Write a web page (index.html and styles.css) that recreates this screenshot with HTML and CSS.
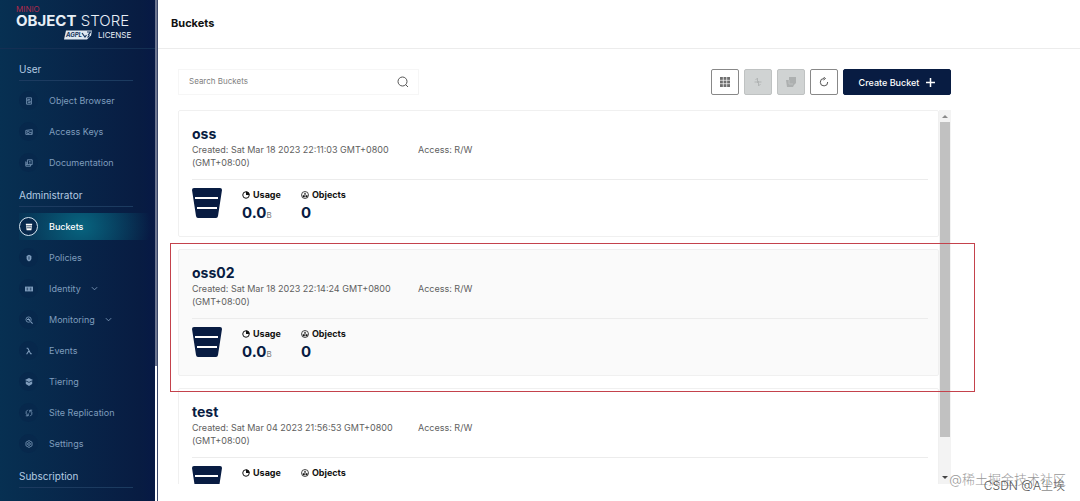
FILE: index.html
```html
<!DOCTYPE html>
<html lang="en">
<head>
<meta charset="UTF-8">
<meta name="viewport" content="width=device-width, initial-scale=1.0">
<title>Buckets</title>
<link rel="stylesheet" href="styles.css">
</head>
<body>

<!-- shared icons -->
<svg width="0" height="0" class="sprite">
  <symbol id="bucket" viewBox="0 0 30 30">
    <path fill="#081c42" d="M2 0h26q2 0 2 2l-4 26q-.3 2-2 2H6q-1.700 0-2-2L0 2Q0 0 2 0z"/>
    <path stroke="#fff" stroke-width="2" d="M3 10h23M5 20h20"/>
  </symbol>
  <symbol id="usage" viewBox="0 0 16 16">
    <circle cx="8" cy="8" r="6.500" fill="none" stroke="currentColor" stroke-width="2"/>
    <path d="M8 1v7h7a7 7 0 0 0-7-7z" fill="currentColor"/>
  </symbol>
  <symbol id="objects" viewBox="0 0 16 16">
    <circle cx="8" cy="8" r="7" fill="none" stroke="currentColor" stroke-width="1.500"/>
    <path d="M8 3l2.500 4h-5zM3.500 8.500h4v4h-4zM9 8.500h4v4H9z" fill="currentColor"/>
  </symbol>
  <symbol id="chevron" viewBox="0 0 8 8">
    <path d="M1 2.500l3 3 3-3" fill="none" stroke="currentColor"/>
  </symbol>
</svg>

<div class="app">
  <aside class="sidebar">
    <div class="logo">
      <div class="logo-brand">MINIO</div>
      <div class="logo-name"><b>OBJECT</b> STORE</div>
      <div class="logo-license">
        <svg width="29" height="10" viewBox="0 0 29 10">
          <path d="M2 0.500h26l-1 5-4 4H0z" fill="#dfe8f0"/>
          <path d="M18 3l3 4 1.500-2M23 2h3.500l-2 2.500q1.500 1-1 3" fill="none" stroke="#12315a" stroke-width="1.200"/>
          <text x="2" y="7" class="agpl">AGPL</text>
        </svg>
        <span>LICENSE</span>
      </div>
    </div>
    <nav class="menu">
      <h2>User</h2>
      <a href="#"><span class="icon"><svg viewBox="0 0 10 10"><path d="M2 1h6v8H2zM6.500 3h-3v2h3v2h-3"/></svg></span>Object Browser</a>
      <a href="#"><span class="icon"><svg viewBox="0 0 10 10"><path d="M1 3l8-1v6H1z"/><circle cx="4" cy="5.500" r="1.500"/><path d="M6 5.500h2v1.500"/></svg></span>Access Keys</a>
      <a href="#"><span class="icon"><svg viewBox="0 0 10 10"><path d="M3 1h6v6H3zM1 3v6h6V7M5 3h2M5 5h2M1 5h2M1 7h2"/></svg></span>Documentation</a>

      <h2>Administrator</h2>
      <a href="#" class="active"><span class="icon"><svg viewBox="0 0 10 10"><path class="solid" d="M1 1h8L8 9H2z"/><path class="cut" d="M1.500 3.500h7M2 6h6"/></svg></span>Buckets</a>
      <a href="#"><span class="icon"><svg viewBox="0 0 10 10"><path class="solid" d="M5 1l3 1.500V6Q8 8 5 9.500 2 8 2 6V2.500z"/><path class="cut" d="M5 3v4"/></svg></span>Policies</a>
      <a href="#"><span class="icon"><svg viewBox="0 0 10 10"><path class="solid" d="M0 2h10v6H0z"/><path class="cut" d="M2 4h2M2 6h2M6 4h2M6 6h2"/></svg></span>Identity<svg class="chevron"><use href="#chevron"/></svg></a>
      <a href="#"><span class="icon"><svg viewBox="0 0 10 10"><circle cx="4.500" cy="4.500" r="3.300"/><path d="M7 7l2.500 2.500M2.500 4.500h1l1-1 1 2 1-1" stroke-width="1.300"/></svg></span>Monitoring<svg class="chevron"><use href="#chevron"/></svg></a>
      <a href="#"><span class="icon"><svg viewBox="0 0 10 10"><path d="M2 1.500h1.500l3.500 7h1.500M5 4.500l-3 4.500" stroke-width="1.300"/></svg></span>Events</a>
      <a href="#"><span class="icon"><svg viewBox="0 0 10 10"><path class="solid" d="M5 0l5 2.500L5 5 0 2.500zM1 4l4 2 4-2v3.500L5 10 1 7.500z"/></svg></span>Tiering</a>
      <a href="#"><span class="icon"><svg viewBox="0 0 10 10"><path d="M3.500 1Q.5 3 1.500 6L4 8.500M1 8.500h3v-3M6.500 9q3-2 2-5L6 1.500M9 1.500H6v3"/></svg></span>Site Replication</a>
      <a href="#"><span class="icon"><svg viewBox="0 0 10 10"><path d="M5 .7l3.800 2.100v4.400L5 9.300 1.200 7.200V2.800z"/><circle cx="5" cy="5" r="1.700"/></svg></span>Settings</a>

      <h2>Subscription</h2>
    </nav>
  </aside>
  <div class="side-scroll"><div class="side-thumb"></div></div>

  <main>
    <header class="page-header"><h1>Buckets</h1></header>
    <div class="content">
      <div class="toolbar">
        <div class="search">
          <input type="text" placeholder="Search Buckets" aria-label="Search Buckets">
          <svg width="12" height="12" viewBox="0 0 12 12"><path d="M8.500 8.500L11 11" /><circle cx="5.500" cy="5.500" r="4.500"/></svg>
        </div>
        <div class="actions">
          <button type="button" class="btn" aria-label="Select multiple"><svg width="10" height="10" viewBox="0 0 10 10"><path d="M0 0h10v10H0z" fill="#6e6e6e"/><path d="M3.300 0v10M6.700 0v10M0 3.300h10M0 6.700h10" stroke="#fff" stroke-width=".7"/></svg></button>
          <button type="button" class="btn" disabled aria-label="Set lifecycle"><svg width="10" height="10" viewBox="0 0 10 10" fill="none" stroke="#b2b5b5"><path d="M4.500 6V1L2.500 3M1.500 5h7M5.500 4v5l2-2"/></svg></button>
          <button type="button" class="btn" disabled aria-label="Set replication"><svg width="10" height="10" viewBox="0 0 10 10"><path d="M3 0h7v6L8 8l-1 2H1L0 3h3z" fill="#adb0b0"/><path d="M3 3v4h4" fill="none" stroke="#c0c3c3"/></svg></button>
          <button type="button" class="btn" aria-label="Refresh"><svg width="10" height="10" viewBox="0 0 10 10" fill="none" stroke="#555"><path d="M5 1.500A3.700 3.700 0 1 0 8.700 5M4.500 0l2 1.500-2 1.500"/></svg></button>
          <button type="button" class="btn create">Create Bucket <svg width="9" height="9" viewBox="0 0 9 9"><path d="M4.500 0v9M0 4.500h9" stroke="#fff" stroke-width="1.500"/></svg></button>
        </div>
      </div>

      <div class="list">
        <div class="cards">
          <article class="card">
            <h3>oss</h3>
            <div class="info">
              <p>Created: Sat Mar 18 2023 22:11:03 GMT+0800 (GMT+08:00)</p>
              <p>Access: R/W</p>
            </div>
            <div class="stats">
              <svg class="bucket"><use href="#bucket"/></svg>
              <div class="stat"><h4><svg><use href="#usage"/></svg>Usage</h4><strong>0.0</strong><small>B</small></div>
              <div class="stat"><h4><svg><use href="#objects"/></svg>Objects</h4><strong>0</strong></div>
            </div>
          </article>
          <article class="card hovered">
            <h3>oss02</h3>
            <div class="info">
              <p>Created: Sat Mar 18 2023 22:14:24 GMT+0800 (GMT+08:00)</p>
              <p>Access: R/W</p>
            </div>
            <div class="stats">
              <svg class="bucket"><use href="#bucket"/></svg>
              <div class="stat"><h4><svg><use href="#usage"/></svg>Usage</h4><strong>0.0</strong><small>B</small></div>
              <div class="stat"><h4><svg><use href="#objects"/></svg>Objects</h4><strong>0</strong></div>
            </div>
          </article>
          <article class="card">
            <h3>test</h3>
            <div class="info">
              <p>Created: Sat Mar 04 2023 21:56:53 GMT+0800 (GMT+08:00)</p>
              <p>Access: R/W</p>
            </div>
            <div class="stats">
              <svg class="bucket"><use href="#bucket"/></svg>
              <div class="stat"><h4><svg><use href="#usage"/></svg>Usage</h4></div>
              <div class="stat"><h4><svg><use href="#objects"/></svg>Objects</h4></div>
            </div>
          </article>
        </div>
        <div class="scrollbar">
          <svg width="12" height="12" viewBox="0 0 12 12"><path d="M3 8l3-3 3 3z" fill="#8a8a8a"/></svg>
          <div class="track"><div class="thumb"></div></div>
          <svg width="12" height="12" viewBox="0 0 12 12"><path d="M3 4l3 3 3-3z" fill="#444"/></svg>
        </div>
      </div>
    </div>
  </main>
</div>

<!-- marks drawn over the page -->
<div class="highlight"></div>
<div class="watermark juejin">@稀土掘金技术社区</div>
<div class="watermark csdn">CSDN @A尘埃</div>

</body>
</html>
```

FILE: styles.css
```css
* {
  box-sizing: border-box;
}

body {
  margin: 0;
  font-family: Inter, "Noto Sans CJK SC", sans-serif;
  font-size: 9px;
  color: #5e5e60;
  background-color: #fff;
}

h1, h2, h3, h4, p {
  margin: 0;
}

.sprite {
  position: absolute;
}

.app {
  display: flex;
  height: 100vh;
  overflow: hidden;
}

/* sidebar */
.sidebar {
  flex: 0 0 155px;
  overflow: hidden;
  background: linear-gradient(90deg, #073052 0%, #081c42 90%, #071945 100%);
}

.logo {
  height: 49px;
  padding: 5px 0 0 16px;
  border-bottom: 1px solid #142f53;
  color: #e8eff6;
}

.logo-brand {
  height: 8px;
  font-size: 8px;
  line-height: 8px;
  color: #b02a4c;
}

.logo-name {
  font-size: 15px;
  line-height: 16px;
  font-weight: 300;
  white-space: nowrap;
}

.logo-name b {
  font-weight: 700;
}

.logo-license {
  display: flex;
  align-items: center;
  gap: 5px;
  padding-left: 48px;
  font-size: 8px;
  line-height: 12px;
}

.agpl {
  font-size: 6px;
  font-style: italic;
  font-weight: 700;
  fill: #12315a;
}

.menu {
  padding: 8px 0 0 19px;
}

.menu h2 {
  width: 114px;
  height: 24px;
  margin-bottom: 4px;
  border-bottom: 1px solid #1c3b60;
  font-size: 10px;
  line-height: 24px;
  font-weight: 400;
  color: #b4cbe2;
}

.menu a + h2 {
  margin-top: 5px;
}

.menu a {
  display: flex;
  align-items: center;
  height: 31px;
  font-size: 9px;
  color: #7f9dbd;
  text-decoration: none;
}

.icon {
  display: flex;
  align-items: center;
  justify-content: center;
  width: 19px;
  height: 19px;
  margin-right: 11px;
  border-radius: 50%;
  background-color: #07284c;
}

.icon svg {
  width: 8px;
  height: 8px;
  fill: none;
  stroke: #7f9dbd;
}

.icon .solid {
  fill: #7f9dbd;
  stroke: none;
}

.icon .cut {
  stroke: #07264a;
}

.chevron {
  width: 7px;
  height: 7px;
  margin-left: 10px;
}

.menu .active {
  padding: 2px 0;
  color: #fff;
  font-weight: 500;
  background: radial-gradient(ellipse 70px 60px at 62px 50%, #07647f, #081c4200) content-box;
}

.active .icon {
  border: 1px solid #d5e4ef;
}

.active .solid {
  fill: #fff;
}

.side-scroll {
  flex: 0 0 3px;
  border-right: 1px solid #3a4668;
  background-color: #fff;
}

.side-thumb {
  height: 73%;
  background-color: #6d7690;
}

/* main area */
main {
  flex: 1;
  display: flex;
  flex-direction: column;
  min-width: 0;
}

.page-header {
  height: 49px;
  padding-left: 13px;
  border-bottom: 1px solid #ececec;
}

.page-header h1 {
  font-size: 11px;
  line-height: 46px;
  color: #111;
}

.content {
  flex: 1;
  display: flex;
  flex-direction: column;
  min-height: 0;
  margin: 20px 129px 17px 20px;
}

.toolbar {
  display: flex;
  justify-content: space-between;
  margin-bottom: 15px;
}

.search {
  display: flex;
  align-items: center;
  width: 241px;
  height: 26px;
  padding: 0 9px 0 10px;
  border: 1px solid #f6f6f6;
}

.search input {
  flex: 1;
  min-width: 0;
  padding: 0 0 2px;
  border: none;
  outline: none;
  font: 8px Inter, sans-serif;
}

.search input::placeholder {
  color: #808080;
}

.search svg {
  fill: none;
  stroke: #555;
}

.actions {
  display: flex;
  gap: 5px;
}

.btn {
  display: flex;
  align-items: center;
  justify-content: center;
  width: 28px;
  height: 26px;
  padding: 0;
  border: 1px solid #888;
  border-radius: 2px;
  background-color: #fff;
}

.btn:disabled {
  border-color: #bfc2c2;
  background-color: #d0d3d3;
}

.create {
  gap: 7px;
  width: 108px;
  border-color: #081c42;
  background-color: #081c42;
  color: #fff;
  font: 500 9px Inter, sans-serif;
}

.list {
  flex: 1;
  display: flex;
  min-height: 0;
}

.cards {
  flex: 1;
  overflow: hidden;
}

.card {
  height: 127px;
  margin-bottom: 12px;
  padding: 14px 10px 0 13px;
  border: 1px solid #f0f0f0;
  border-radius: 2px;
}

.hovered {
  background-color: #fafafa;
}

.card h3 {
  font-size: 14px;
  line-height: 18px;
  color: #081c42;
}

.info {
  display: flex;
  gap: 21px;
  padding-bottom: 10px;
  border-bottom: 1px solid #ececec;
  line-height: 13px;
}

.info p:first-child {
  width: 205px;
}

.stats {
  display: flex;
  gap: 20px;
  padding-top: 8px;
}

.bucket {
  width: 30px;
  height: 30px;
}

.stat {
  color: #081c42;
}

.stat h4 {
  display: flex;
  align-items: center;
  gap: 3px;
  font-size: 9px;
  line-height: 14px;
  color: #111;
}

.stat h4 svg {
  width: 8px;
  height: 8px;
}

.stat strong {
  font-size: 15px;
  line-height: 22px;
}

.stat small {
  font-size: 8px;
  color: #777;
}

.scrollbar {
  display: flex;
  flex-direction: column;
  width: 12px;
  background-color: #f3f3f3;
}

.track {
  flex: 1;
  padding: 0 1px;
}

.thumb {
  height: 90%;
  background-color: #c1c1c1;
}

/* overlays */
.highlight {
  position: absolute;
  left: 170px;
  top: 243px;
  width: 805px;
  height: 149px;
  border: 1px solid #c4424c;
}

.watermark {
  position: absolute;
  white-space: nowrap;
  font-weight: 300;
}

.juejin {
  right: 14px;
  bottom: 13px;
  font-size: 13px;
  line-height: 18px;
  color: #999;
}

.csdn {
  right: 15px;
  bottom: 6px;
  font-size: 12px;
  line-height: 18px;
  color: #555;
}
```
